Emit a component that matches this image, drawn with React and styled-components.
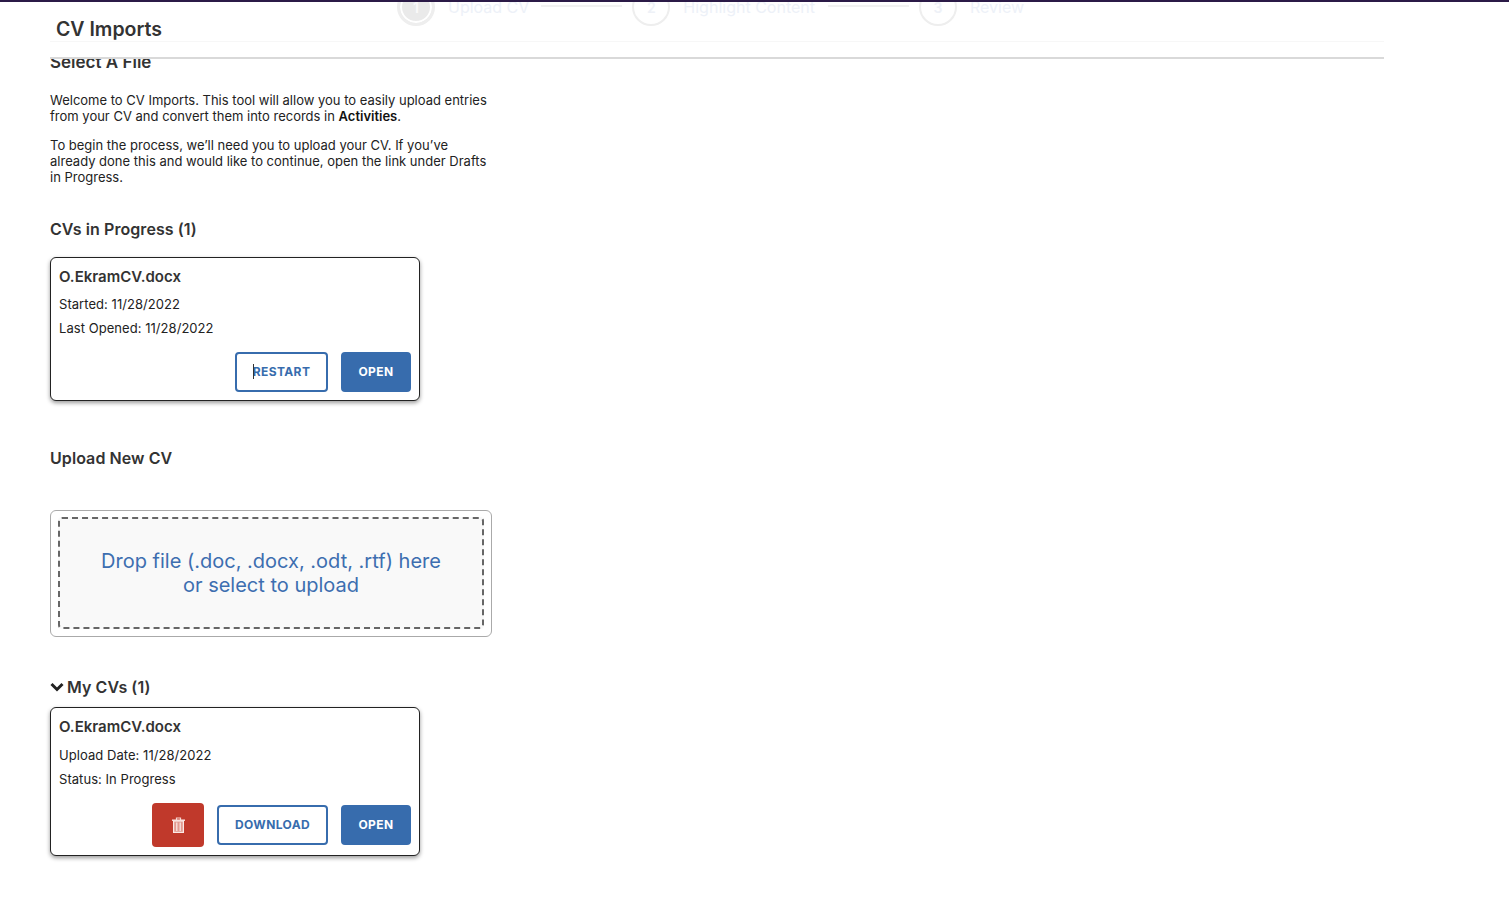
import styled, { createGlobalStyle } from "styled-components";

const GlobalStyle = createGlobalStyle`
  html, body {
    margin: 0;
    padding: 0;
    background: #fff;
    font-family: Inter, "Liberation Sans", sans-serif;
    color: #222;
  }
  * { box-sizing: border-box; }
`;

const Page = styled.div`
  width: 1509px;
  height: 915px;
  overflow: hidden;
  border-top: 2px solid #2b1a47;
`;

const Header = styled.header`
  height: 57px;
  width: 1334px;
  margin-left: 50px;
  border-bottom: 2px solid #d9d9d9;
  position: relative;
  overflow: hidden;
`;

const HeaderRow = styled.div`
  height: 40px;
  border-bottom: 1px solid #f7f7f7;
  display: flex;
  padding-left: 6px;
`;

const PageTitle = styled.h1`
  margin: 15px 0 0;
  width: 341px;
  font-size: 19.5px;
  line-height: 24px;
  font-weight: 600;
  color: #333;
`;

const Stepper = styled.div`
  display: flex;
  align-items: center;
  height: 38px;
  margin-top: -14px;
`;

const StepCircle = styled.div`
  width: 38px;
  height: 38px;
  flex: none;
  border-radius: 50%;
  border: ${(p) => (p.$active ? 3 : 2)}px solid #eee;
  display: flex;
  align-items: center;
  justify-content: center;
  font-size: 14px;
  font-weight: 600;
  color: ${(p) => (p.$active ? "#fafafa" : "#eef1f7")};
  background: ${(p) => (p.$active ? "#eaeaea" : "#fff")};
  box-shadow: ${(p) => (p.$active ? "inset 0 0 0 2px #fff" : "none")};
`;

const StepLabel = styled.span`
  margin-left: 13px;
  font-size: 16px;
  color: #edf1f8;
  white-space: nowrap;
`;

const StepLine = styled.span`
  width: 81px;
  height: 2px;
  margin: -2px 10px 0 ${(p) => p.$left}px;
  background: #f1f1f1;
`;

const Content = styled.main`
  height: 856px;
  overflow: hidden;
  padding-left: 50px;
`;

const ClippedHeading = styled.h2`
  margin: -7px 0 0;
  font-size: 17px;
  line-height: 20px;
  font-weight: 600;
  color: #333;
`;

const Paragraph = styled.p`
  margin: ${(p) => p.$top}px 0 0;
  width: 445px;
  font-size: 13px;
  line-height: 16px;
  color: #222;

  strong { font-weight: 600; color: #111; }
`;

const SectionHeading = styled.h3`
  display: flex;
  align-items: center;
  gap: 3px;
  margin: ${(p) => p.$top}px 0 0;
  font-size: 16px;
  line-height: 20px;
  font-weight: 600;
  letter-spacing: 0.07px;
  color: #333;
`;

const Chevron = styled.svg`
  width: 14px;
  height: 10px;
  flex: none;
`;

const Card = styled.section`
  width: 370px;
  height: ${(p) => p.$height}px;
  margin-top: ${(p) => p.$top}px;
  padding: 9px 8px 8px;
  background: #fff;
  border: 1px solid #222;
  border-radius: 6px;
  box-shadow: 0 2px 4px rgba(0, 0, 0, 0.4);
  display: flex;
  flex-direction: column;
`;

const CardTitle = styled.div`
  font-size: 15px;
  line-height: 20px;
  font-weight: 600;
  color: #333;
  margin-bottom: ${(p) => p.$gap}px;
`;

const CardLine = styled.div`
  font-size: 13px;
  line-height: 16px;
  margin-top: 8px;
  letter-spacing: 0.05px;
  color: #222;

  &:first-of-type { margin-top: 0; }
`;

const Actions = styled.div`
  margin-top: auto;
  display: flex;
  justify-content: flex-end;
  align-items: center;
  gap: 13px;
`;

const Button = styled.button`
  position: relative;
  width: ${(p) => p.$width}px;
  height: 40px;
  padding: 0 0 2px;
  border-radius: 4px;
  border: 2px solid #376cad;
  background: ${(p) => (p.$primary ? "#376cad" : "#fff")};
  color: ${(p) => (p.$primary ? "#fff" : "#376cad")};
  font-family: inherit;
  font-size: 12px;
  font-weight: 700;
  letter-spacing: 0.4px;
`;

const DeleteButton = styled.button`
  width: 52px;
  height: 44px;
  padding: 0;
  border: none;
  border-radius: 4px;
  background: #c0392b;
  display: flex;
  align-items: center;
  justify-content: center;
`;

// i-beam mouse pointer caught in the screenshot
const TextCursor = styled.span`
  position: absolute;
  left: 16px;
  top: 10px;
  width: 1px;
  height: 15px;
  background: #333;
`;

const DropOuter = styled.div`
  width: 442px;
  height: 127px;
  margin-top: 42px;
  padding: 6px 7px 7px;
  border: 1px solid #aaa;
  border-radius: 6px;
`;

const DropInner = styled.div`
  height: 100%;
  border: 2px dashed #666;
  border-radius: 4px;
  background: #f9f9f9;
  display: flex;
  align-items: center;
  justify-content: center;
  text-align: center;
  font-size: 20px;
  line-height: 24px;
  color: #3d6eb0;
`;

function TrashIcon() {
  return (
    <svg width="13" height="16" viewBox="0 0 13 16" aria-hidden="true">
      <path d="M4.5 3V1h4v2" stroke="#f6d5d0" strokeWidth="1.2" fill="none" />
      <path d="M0 3.2h13" stroke="#fbe9e6" strokeWidth="1.4" />
      <rect x="1.6" y="4" width="9.8" height="11.4" fill="#e29a90" stroke="#fbe9e6" strokeWidth="1.2" />
      <path d="M4.8 5.5v8.5M8.2 5.5v8.5" stroke="#fbe9e6" strokeWidth="1.2" />
    </svg>
  );
}

export default function App() {
  return (
    <Page>
      <GlobalStyle />
      <Header>
        <HeaderRow>
          <PageTitle>CV Imports</PageTitle>
          <Stepper>
            <StepCircle $active>1</StepCircle>
            <StepLabel>Upload CV</StepLabel>
            <StepLine $left={12} />
            <StepCircle>2</StepCircle>
            <StepLabel>Highlight Content</StepLabel>
            <StepLine $left={13} />
            <StepCircle>3</StepCircle>
            <StepLabel>Review</StepLabel>
          </Stepper>
        </HeaderRow>
      </Header>
      <Content>
        <ClippedHeading>Select A File</ClippedHeading>
        <Paragraph $top={20}>
          Welcome to CV Imports. This tool will allow you to easily upload entries from your CV and
          convert them into records in <strong>Activities</strong>.
        </Paragraph>
        <Paragraph $top={13}>
          To begin the process, we’ll need you to upload your CV. If you’ve already done this and
          would like to continue, open the link under Drafts in Progress.
        </Paragraph>

        <SectionHeading $top={34}>CVs in Progress (1)</SectionHeading>
        <Card $top={18} $height={144}>
          <CardTitle $gap={1}>O.EkramCV.docx</CardTitle>
          <CardLine>Started: 11/28/2022</CardLine>
          <CardLine>Last Opened: 11/28/2022</CardLine>
          <Actions>
            <Button $width={93}>
              RESTART
              <TextCursor />
            </Button>
            <Button $width={70} $primary>OPEN</Button>
          </Actions>
        </Card>

        <SectionHeading $top={47}>Upload New CV</SectionHeading>
        <DropOuter>
          <DropInner>
            Drop file (.doc, .docx, .odt, .rtf) here
            <br />
            or select to upload
          </DropInner>
        </DropOuter>

        <SectionHeading $top={40}>
          <Chevron viewBox="0 0 14 10" aria-hidden="true">
            <path d="M1.5 2 7 7.5 12.5 2" stroke="#222" strokeWidth="3" fill="none" />
          </Chevron>
          My CVs (1)
        </SectionHeading>
        <Card $top={10} $height={149}>
          <CardTitle $gap={2}>O.EkramCV.docx</CardTitle>
          <CardLine>Upload Date: 11/28/2022</CardLine>
          <CardLine>Status: In Progress</CardLine>
          <Actions>
            <DeleteButton aria-label="Delete">
              <TrashIcon />
            </DeleteButton>
            <Button $width={111}>DOWNLOAD</Button>
            <Button $width={70} $primary>OPEN</Button>
          </Actions>
        </Card>
      </Content>
    </Page>
  );
}
